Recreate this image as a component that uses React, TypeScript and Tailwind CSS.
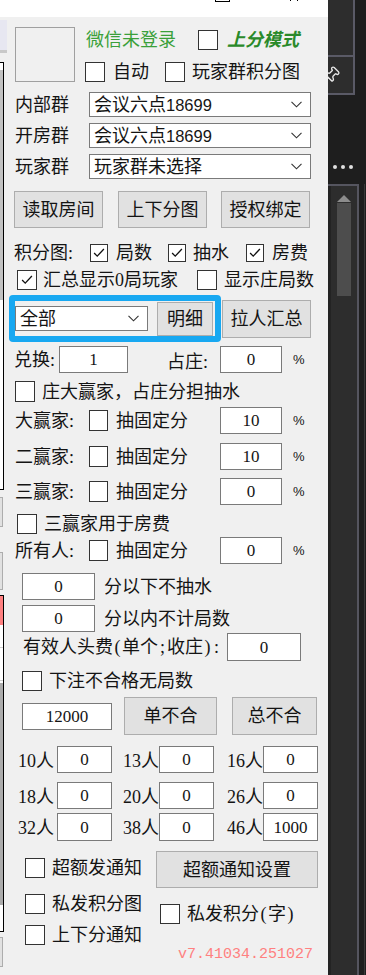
import { Pin } from 'lucide-react'

// small win32-ish controls
function Box({ on = false, size = 'w-[20px] h-[20px]' }: { on?: boolean; size?: string }) {
  return (
    <div className={`${size} shrink-0 border border-[#333] bg-white flex items-center justify-center`}>
      {on && (
        <svg viewBox="0 0 18 18" className="w-[16px] h-[16px]">
          <path d="M3.5 9 L7 12.5 L14.5 4.5" fill="none" stroke="#111" strokeWidth="1.5" />
        </svg>
      )}
    </div>
  )
}

function Chevron() {
  return (
    <svg width="11" height="7" viewBox="0 0 11 7" className="shrink-0">
      <polyline points="0.5,0.8 5.5,5.8 10.5,0.8" fill="none" stroke="#333" strokeWidth="1.1" />
    </svg>
  )
}

function Select({ children, size }: { children: React.ReactNode; size: string }) {
  return (
    <div className={`${size} shrink-0 bg-white border border-[#7a7a7a] flex items-center pl-[4px] pr-[8px]`}>
      <span className="flex-1 leading-none whitespace-nowrap">{children}</span>
      <Chevron />
    </div>
  )
}

function Btn({ children, size, ml = '' }: { children: React.ReactNode; size: string; ml?: string }) {
  return (
    <div className={`${size} ${ml} shrink-0 bg-[#e1e1e1] border border-[#adadad] flex items-center justify-center leading-none`}>
      {children}
    </div>
  )
}

function Field({ value, size = 'w-[62px] h-[27px]' }: { value: string; size?: string }) {
  return (
    <div className={`${size} shrink-0 bg-white border border-[#7a7a7a] flex items-center justify-center text-[17px] leading-none`}>
      {value}
    </div>
  )
}

function Num({ children }: { children: React.ReactNode }) {
  return <span className="font-['Liberation_Sans',sans-serif] text-[16.5px]">{children}</span>
}

function Pct() {
  return <span className="ml-[11px] text-[13px] leading-none font-['Liberation_Sans',sans-serif]">%</span>
}

function WinRow({ label, mt, value }: { label: string; mt: string; value: string }) {
  return (
    <div className={`${mt} h-[27px] flex items-center`}>
      <span className="ml-[11px] w-[74px] leading-none">{label}</span>
      <Box size="w-[19px] h-[21px]" />
      <span className="ml-[8px] w-[104px] leading-none">抽固定分</span>
      <Field value={value} />
      <Pct />
    </div>
  )
}

function GridRow({ mt, cells, h = 'h-[27px]' }: { mt: string; cells: [string, string][]; h?: string }) {
  return (
    <div className={`${mt} ${h} flex items-center text-[18px]`}>
      <span className="ml-[14px] w-[39px] leading-none pt-[2px]">{cells[0][0]}</span>
      <Field value={cells[0][1]} size={`w-[55px] ${h}`} />
      <span className="ml-[11px] w-[36px] leading-none pt-[2px]">{cells[1][0]}</span>
      <Field value={cells[1][1]} size={`w-[55px] ${h}`} />
      <span className="ml-[13px] w-[36px] leading-none pt-[2px]">{cells[2][0]}</span>
      <Field value={cells[2][1]} size={`w-[55px] ${h}`} />
    </div>
  )
}

function LeftStrip() {
  return (
    <div className="w-[7px] shrink-0 flex flex-col">
      <div className="h-[3px]" />
      <div className="h-[30px] bg-[#e7e7f1]" />
      <div className="h-[3px] bg-[#c9c9c9]" />
      <div className="h-[9px]" />
      <div className="w-[4px] h-[428px] border-t border-r border-b border-black bg-white flex flex-col">
        <div className="h-[7px]" />
        <div className="h-[230px] bg-[#c2c2c2]" />
      </div>
      <div className="h-[7px]" />
      <div className="w-[3px] h-[30px] bg-[#e1e1e1] border-r border-y border-[#adadad]" />
      <div className="h-[25px]" />
      <div className="w-[3px] h-[38px] bg-[#e1e1e1] border-r border-y border-[#adadad]" />
      <div className="h-[5px]" />
      <div className="w-[4px] h-[337px] border-t border-r border-b border-black bg-white flex flex-col">
        <div className="h-[29px] bg-[#ff8080]" />
        <div className="h-[22px]" />
        <div className="h-px bg-[#cfcfcf]" />
        <div className="h-[32px]" />
        <div className="h-px bg-[#cfcfcf]" />
        <div className="h-[2px]" />
        <div className="h-[222px] bg-[#ababab]" />
      </div>
      <div className="h-[5px]" />
      <div className="w-[3px] h-[30px] bg-[#e1e1e1] border-r border-y border-[#adadad]" />
    </div>
  )
}

function DarkSide() {
  return (
    <div className="w-[38px] shrink-0 h-[975px] bg-[#1e1e1e] flex flex-col">
      <div className="h-[95px] flex">
        <div className="w-[27px] flex flex-col">
          <div className="h-[57px] bg-[#2d2d2d] border-r-2 border-b-2 border-[#5a5a66]" />
          <div className="h-[38px] bg-[#2d2d2d] border-r-2 border-b-2 border-[#5a5a66] flex items-center overflow-hidden">
            <Pin className="-ml-[6px] w-[18px] h-[18px] text-[#e8e8e8] rotate-45" strokeWidth={1.8} />
          </div>
        </div>
      </div>
      <div className="h-[89px] flex items-start">
        <div className="mt-[70px] ml-[5px] flex gap-[4px]">
          <div className="w-[4px] h-[4px] rounded-full bg-[#e0e0e0]" />
          <div className="w-[4px] h-[4px] rounded-full bg-[#e0e0e0]" />
          <div className="w-[4px] h-[4px] rounded-full bg-[#e0e0e0]" />
        </div>
      </div>
      <div className="flex-1 flex">
        <div className="w-[31px] border-t-2 border-r-2 border-[#55555f] flex">
          <div className="w-[3px] bg-[#232323]" />
          <div className="flex-1 bg-[#2d2d2d] flex flex-col">
            <svg width="14" height="7" viewBox="0 0 14 7" className="ml-[6px] mt-[9px]">
              <polygon points="7,0 14,7 0,7" fill="#8c8c8c" />
            </svg>
            <div className="ml-[6px] mt-[1px] w-[14px] h-[93px] bg-[#4d4d4d]" />
          </div>
        </div>
        <div className="w-[5px]" />
        <div className="w-px bg-[#3a3a3a]" />
      </div>
    </div>
  )
}

export default function App() {
  return (
    <div className="w-[366px] h-[975px] flex overflow-hidden bg-[#f0f0f0] text-[#141414] text-[18px] font-['Liberation_Serif','Noto_Sans_CJK_SC',sans-serif]">
      <div className="w-[328px] shrink-0 flex flex-col">
        {/* title bar, mostly cut off */}
        <div className="h-[17px] bg-white flex items-start">
          <div className="ml-[215px] w-[15px] h-[2px] border-x border-b border-black" />
          <svg width="14" height="4" viewBox="0 0 14 4" className="ml-[57px]">
            <path d="M0 -3 L4 1 M14 -3 L10 1" stroke="#000" strokeWidth="1" />
          </svg>
        </div>

        <div className="flex flex-1">
          <LeftStrip />

          <div className="flex-1 flex flex-col">
            {/* avatar + login state */}
            <div className="mt-[10px] h-[55px] flex -ml-[3px]">
              <div className="ml-[11px] w-[60px] h-[55px] border border-[#a0a0a0]" />
              <div className="ml-[10px] flex flex-col">
                <div className="mt-[3px] h-[20px] flex items-center">
                  <span className="ml-[1px] w-[112px] leading-none text-[#3aa03a]">微信未登录</span>
                  <Box />
                  <span className="ml-[9px] leading-none font-bold italic text-[#2a8a2a]">上分模式</span>
                </div>
                <div className="mt-[12px] h-[20px] flex items-center">
                  <Box />
                  <span className="ml-[8px] w-[52px] leading-none">自动</span>
                  <Box />
                  <span className="ml-[7px] leading-none">玩家群积分图</span>
                </div>
              </div>
            </div>

            {/* group selects */}
            {[
              ['内部群', 'mt-[10px]', '会议六点', '18699'],
              ['开房群', 'mt-[6px]', '会议六点', '18699'],
              ['玩家群', 'mt-[6px]', '玩家群未选择', ''],
            ].map(([label, mt, txt, num]) => (
              <div key={label} className={`${mt} h-[25px] flex items-center -ml-[3px]`}>
                <span className="ml-[11px] w-[74px] leading-none">{label}</span>
                <Select size="w-[222px] h-[25px]">
                  {txt}
                  {num && <Num>{num}</Num>}
                </Select>
              </div>
            ))}

            <div className="mt-[12px] h-[37px] flex -ml-[3px]">
              <Btn size="w-[89px] h-[37px]" ml="ml-[10px]">读取房间</Btn>
              <Btn size="w-[89px] h-[37px]" ml="ml-[15px]">上下分图</Btn>
              <Btn size="w-[89px] h-[37px]" ml="ml-[14px]">授权绑定</Btn>
            </div>

            <div className="mt-[16px] h-[18px] flex items-center -ml-[3px]">
              <span className="ml-[10px] w-[76px] leading-none">积分图:</span>
              <Box on size="w-[18px] h-[18px]" />
              <span className="ml-[8px] w-[52px] leading-none">局数</span>
              <Box on size="w-[18px] h-[18px]" />
              <span className="ml-[7px] w-[53px] leading-none">抽水</span>
              <Box on size="w-[18px] h-[18px]" />
              <span className="ml-[8px] leading-none">房费</span>
            </div>

            <div className="mt-[8px] h-[20px] flex items-center -ml-[3px]">
              <Box on size="ml-[13px] w-[20px] h-[20px]" />
              <span className="ml-[6px] w-[154px] leading-none">汇总显示0局玩家</span>
              <Box />
              <span className="ml-[7px] leading-none">显示庄局数</span>
            </div>

            {/* highlighted filter */}
            <div className="mt-[5px] h-[47px] flex items-start -ml-[3px]">
              <div className="ml-[5px] w-[212px] h-[47px] border-[6px] border-[#18a8f1] rounded-[4px] flex items-center">
                <Select size="w-[133px] h-[25px]">全部</Select>
                <Btn size="w-[56px] h-[34px]" ml="ml-[9px]">明细</Btn>
              </div>
              <Btn size="w-[89px] h-[38px]" ml="ml-[1px] mt-[5px]">拉人汇总</Btn>
            </div>

            <div className="mt-[4px] h-[27px] flex items-center -ml-[3px]">
              <span className="ml-[10px] w-[45px] leading-none">兑换:</span>
              <Field value="1" size="w-[69px] h-[27px]" />
              <span className="ml-[39px] w-[53px] leading-none pt-[4px]">占庄:</span>
              <Field value="0" />
              <Pct />
            </div>

            <div className="mt-[8px] h-[21px] flex items-center -ml-[3px]">
              <Box size="ml-[11px] w-[20px] h-[21px]" />
              <span className="ml-[7px] leading-none">庄大赢家，占庄分担抽水</span>
            </div>

            <div className="-ml-[3px] flex flex-col">
              <WinRow label="大赢家:" mt="mt-[5px]" value="10" />
              <WinRow label="二赢家:" mt="mt-[9px]" value="10" />
              <WinRow label="三赢家:" mt="mt-[8px]" value="0" />
              <div className="mt-[9px] h-[20px] flex items-center">
                <Box size="ml-[13px] w-[20px] h-[20px]" />
                <span className="ml-[7px] leading-none">三赢家用于房费</span>
              </div>
              <WinRow label="所有人:" mt="mt-[3px]" value="0" />
            </div>

            <div className="mt-[9px] h-[27px] flex items-center -ml-[3px]">
              <Field value="0" size="ml-[18px] w-[73px] h-[27px]" />
              <span className="ml-[9px] leading-none">分以下不抽水</span>
            </div>
            <div className="mt-[5px] h-[27px] flex items-center -ml-[3px]">
              <Field value="0" size="ml-[18px] w-[73px] h-[27px]" />
              <span className="ml-[9px] leading-none">分以内不计局数</span>
            </div>

            <div className="mt-[1px] h-[28px] flex items-center -ml-[3px]">
              <span className="ml-[19px] w-[204px] leading-none whitespace-nowrap flex items-center">
                有效人头费<span className="inline-block w-[9px] text-center">(</span>单个
                <span className="inline-block w-[9px] text-center">;</span>收庄
                <span className="inline-block w-[9px] text-center">)</span>
                <span className="inline-block w-[9px] text-center">:</span>
              </span>
              <Field value="0" size="w-[74px] h-[28px]" />
            </div>

            <div className="mt-[10px] h-[20px] flex items-center -ml-[3px]">
              <Box size="ml-[18px] w-[20px] h-[20px]" />
              <span className="ml-[7px] leading-none">下注不合格无局数</span>
            </div>

            <div className="mt-[6px] h-[38px] flex items-center -ml-[3px]">
              <Field value="12000" size="ml-[18px] w-[90px] h-[27px]" />
              <Btn size="w-[93px] h-[38px]" ml="ml-[12px]">单不合</Btn>
              <Btn size="w-[85px] h-[38px]" ml="ml-[15px]">总不合</Btn>
            </div>

            <div className="-ml-[3px] flex flex-col">
              <GridRow mt="mt-[11px]" cells={[['10人', '0'], ['13人', '0'], ['16人', '0']]} />
              <GridRow mt="mt-[9px]" cells={[['18人', '0'], ['20人', '0'], ['26人', '0']]} />
              <GridRow mt="mt-[4px]" h="h-[28px]" cells={[['32人', '0'], ['38人', '0'], ['46人', '1000']]} />
            </div>

            {/* notify options */}
            <div className="mt-[10px] flex -ml-[3px]">
              <div className="ml-[21px] w-[131px] flex flex-col">
                <div className="mt-[7px] h-[20px] flex items-center">
                  <Box />
                  <span className="ml-[7px] leading-none">超额发通知</span>
                </div>
                <div className="mt-[16px] h-[20px] flex items-center">
                  <Box />
                  <span className="ml-[7px] leading-none">私发积分图</span>
                </div>
                <div className="mt-[11px] h-[20px] flex items-center">
                  <Box />
                  <span className="ml-[7px] leading-none">上下分通知</span>
                </div>
              </div>
              <div className="w-[162px] flex flex-col">
                <Btn size="w-[162px] h-[37px]">超额通知设置</Btn>
                <div className="mt-[16px] h-[20px] flex items-center">
                  <Box size="ml-[4px] w-[20px] h-[20px]" />
                  <span className="ml-[7px] leading-none whitespace-nowrap">
                    私发积分<span className="inline-block w-[9px] text-center">(</span>字
                    <span className="inline-block w-[9px] text-center">)</span>
                  </span>
                </div>
                <div className="mt-[23px] pr-[5px] text-right text-[15px] leading-[15px] text-[#ff8080] font-['Liberation_Mono',monospace]">
                  v7.41034.251027
                </div>
              </div>
            </div>
          </div>
        </div>
      </div>

      <DarkSide />
    </div>
  )
}
